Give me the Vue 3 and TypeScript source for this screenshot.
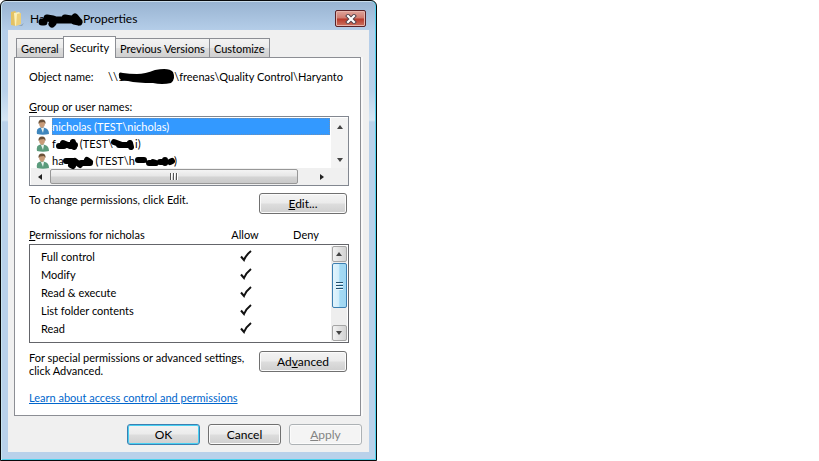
<script setup lang="ts">
import { ref } from 'vue'

interface Tab { id: string; label: string }

const tabs: Tab[] = [
  { id: 'general', label: 'General' },
  { id: 'security', label: 'Security' },
  { id: 'previous', label: 'Previous Versions' },
  { id: 'customize', label: 'Customize' },
]
const activeTab = ref('security')
const selectedUser = ref(0)
const permissions: string[] = ['Full control', 'Modify', 'Read & execute', 'List folder contents', 'Read']
</script>

<template>
  <main class="dialog">
    <header class="titlebar">
      <svg class="folder" width="16" height="18" viewBox="0 0 16 18" aria-hidden="true">
        <path d="M2 2l4-1 1 1v14l-5-1z" fill="#e3c264" />
        <path d="M5 3l5-1 1 1v11l-5 2z" fill="#fbf0b8" />
        <path d="M8 4l4-1v11l-5 2z" fill="#edd07a" />
        <path d="M9 16l3-1 3-2-2 3z" fill="#8fa3b5" />
      </svg>
      <h1 class="title">
        <span>Ha</span>
        <svg class="ink ink-title" width="45" height="14" viewBox="0 0 45 14" aria-hidden="true">
          <path d="M4 10h2M9 6l6 1M15 11l-1 1M18 8h16M27 6l6 1M37 5l4 5M36 9l5 1" />
        </svg>
        <span>Properties</span>
      </h1>
      <button class="close" type="button" aria-label="Close">
        <svg width="12" height="10" viewBox="0 0 12 10" aria-hidden="true">
          <path d="M3 2l6 6M9 2l-6 6" stroke="#51414a" stroke-width="4" stroke-linecap="square" />
          <path d="M3 2l6 6M9 2l-6 6" stroke="#fff" stroke-width="2.200" stroke-linecap="square" />
        </svg>
      </button>
    </header>

    <div class="client">
      <div class="tabs" role="tablist">
        <button
          v-for="tab in tabs"
          :key="tab.id"
          type="button"
          role="tab"
          class="tab"
          :class="{ active: tab.id === activeTab }"
          :aria-selected="tab.id === activeTab"
          @click="activeTab = tab.id"
        >{{ tab.label }}</button>
      </div>

      <section class="panel">
        <div class="object">
          <span class="object-label">Object name:</span>
          <span class="path">
            <span>\\1</span>
            <svg class="ink ink-path" width="58" height="17" viewBox="0 0 58 17" aria-hidden="true">
              <path d="M2 8Q1 3 6 5Q12 6 20 6T38 2Q52-1 56 4Q59 11 54 15Q45 17 36 15Q20 15 11 13Q1 13 2 8z" fill="#000" />
            </svg>
            <span>\freenas\Quality Control\Haryanto</span>
          </span>
        </div>

        <p id="users-label" class="label"><u>G</u>roup or user names:</p>
        <div class="users">
          <ul class="user-list" role="listbox" aria-labelledby="users-label">
            <li class="user" role="option" :class="{ selected: selectedUser === 0 }" :aria-selected="selectedUser === 0" @click="selectedUser = 0">
              <svg class="person blue" width="16" height="16" viewBox="0 0 16 16" aria-hidden="true"><use href="#person" /></svg>
              <span class="user-name">nicholas (TEST\nicholas)</span>
            </li>
            <li class="user" role="option" :class="{ selected: selectedUser === 1 }" :aria-selected="selectedUser === 1" @click="selectedUser = 1">
              <svg class="person" width="16" height="16" viewBox="0 0 16 16" aria-hidden="true"><use href="#person" /></svg>
              <span class="user-name">
                <span>f</span>
                <svg class="ink ink-a" width="22" height="13" viewBox="0 0 22 13" aria-hidden="true"><path d="M3 9h5M7 6l7 3M11 8h8M17 5l1 5" /></svg>
                <span class="gap-left">(TEST\</span>
                <svg class="ink ink-b" width="24" height="13" viewBox="0 0 24 13" aria-hidden="true"><path d="M3 5l8 3M8 8h11M19 6l1 4" /></svg>
                <span>i)</span>
              </span>
            </li>
            <li class="user" role="option" :class="{ selected: selectedUser === 2 }" :aria-selected="selectedUser === 2" @click="selectedUser = 2">
              <svg class="person" width="16" height="16" viewBox="0 0 16 16" aria-hidden="true"><use href="#person" /></svg>
              <span class="user-name">
                <span>ha</span>
                <svg class="ink ink-c" width="31" height="13" viewBox="0 0 31 13" aria-hidden="true"><path d="M3 7h7M8 11l2 1M12 7l5 4M18 9h9M24 6l3 2" /></svg>
                <span class="gap-left">(TEST\h</span>
                <svg class="ink ink-d" width="42" height="13" viewBox="0 0 42 13" aria-hidden="true"><path d="M4 6h6M15 9h5M19 8l3 1M26 8h6M31 6v3M36 8l2-1" /></svg>
                <span class="close-paren">)</span>
              </span>
            </li>
          </ul>
          <div class="vbar idle" aria-hidden="true"><i class="arrow up"></i><i class="arrow down"></i></div>
          <div class="hbar" aria-hidden="true">
            <i class="arrow left"></i>
            <div class="hthumb"><i></i><i></i><i></i></div>
            <i class="arrow right"></i>
          </div>
        </div>

        <div class="action edit">
          <p>To change permissions, click Edit.</p>
          <button class="button" type="button"><span><u>E</u>dit...</span></button>
        </div>

        <div class="perm-head">
          <span id="perm-label"><u>P</u>ermissions for nicholas</span>
          <span class="center">Allow</span>
          <span class="center">Deny</span>
        </div>
        <div class="perms">
          <table class="perm-table" aria-labelledby="perm-label">
            <tbody>
              <tr v-for="name in permissions" :key="name">
                <th scope="row">{{ name }}</th>
                <td class="allow">
                  <svg width="12" height="12" viewBox="0 0 12 12" role="img" aria-label="Allowed">
                    <path d="M1 6.500l3 3.500Q6 5 11 1" fill="none" stroke="#111" stroke-width="2" />
                  </svg>
                </td>
                <td class="deny"></td>
              </tr>
            </tbody>
          </table>
          <div class="vbar" aria-hidden="true">
            <div class="cap"><i class="arrow up"></i></div>
            <div class="vthumb"><i></i><i></i><i></i></div>
            <div class="cap bottom"><i class="arrow down"></i></div>
          </div>
        </div>

        <div class="action advanced">
          <p>For special permissions or advanced settings, click Advanced.</p>
          <button class="button" type="button"><span>Ad<u>v</u>anced</span></button>
        </div>
        <a class="link" href="#">Learn about access control and permissions</a>
      </section>

      <footer class="footer">
        <button class="button default" type="button">OK</button>
        <button class="button" type="button">Cancel</button>
        <button class="button" type="button" disabled><span><u>A</u>pply</span></button>
      </footer>
    </div>

    <svg class="defs" width="0" height="0" aria-hidden="true">
      <symbol id="person" viewBox="0 0 16 16">
        <path d="M1 15Q0 10 3 9l3-1 3 1q4 1 4 6-6 1.500-12 0z" fill="currentColor" />
        <path d="M5 9l2 5 1-5z" fill="#e9f3ef" />
        <path d="M3 4Q3 1 6 1t3 3q0 4-3 5-3-1-3-5z" class="face" />
        <path d="M2.500 5Q2 .5 6 .5T9.500 5L8 3 4 3.500z" class="hair" />
      </symbol>
    </svg>
  </main>
</template>

<style>
body {
  margin: 0;
  background: #fff;
}
</style>

<style scoped>
* {
  box-sizing: border-box;
}
.dialog {
  position: relative;
  width: 100%;
  max-width: 377px;
  padding: 0 7px 8px;
  border: 1px solid #08090b;
  border-radius: 6px 6px 0 0;
  background: linear-gradient(#98b3d1, #b5cee9 30px, #b9d1ea 90px, #d5e5f3 119px, #b9d1ea 121px);
  box-shadow: inset 1px 0 #c8e4ef, inset -1px 0 #50d2ee, inset 0 -1px #50d2ee, inset 0 1px #c9dceb;
  font-family: Lato, "Liberation Sans", sans-serif;
  font-size: 11px;
  line-height: 13px;
  color: #000;
}
.titlebar {
  display: flex;
  align-items: center;
  height: 29px;
  padding: 6px 3px 0 1px;
}
.folder {
  margin-right: 5px;
}
.title {
  display: flex;
  align-items: center;
  flex: 1;
  margin: 0;
  font-size: 12px;
  font-weight: 400;
}
.ink {
  flex: none;
  fill: none;
  stroke: #000;
  stroke-width: 6;
  stroke-linecap: round;
  stroke-linejoin: round;
  overflow: visible;
}
.ink-title {
  margin-left: -7px;
  stroke-width: 7;
}
.close {
  display: flex;
  align-items: center;
  justify-content: center;
  width: 31px;
  height: 17px;
  padding: 0;
  border: 1px solid #5a2227;
  border-radius: 2px;
  background: linear-gradient(#dfa49b, #cf7a6e 48%, #b7382a 52%, #cc7361);
  box-shadow: inset 0 0 0 1px #e7b4ac;
}
.client {
  padding: 7px 8px 7px 6px;
  background: #f0f0f0;
}
.tabs {
  display: flex;
  align-items: flex-end;
  padding-left: 2px;
  height: 20px;
}
.tab {
  height: 19px;
  padding: 1px 4px 0;
  border: 1px solid #8c8e94;
  border-bottom: 0;
  border-left-width: 0;
  background: linear-gradient(#f3f3f3, #ebebeb 48%, #dddddd 52%, #d0d0d0);
  font: inherit;
  color: inherit;
  white-space: nowrap;
}
.tab:first-child {
  border-left-width: 1px;
}
.tab.active {
  position: relative;
  height: 22px;
  margin: 0 0 -1px -1px;
  padding: 0 6px 1px;
  border-left-width: 1px;
  background: #fff;
}
.panel {
  padding: 12px 11px 11px 14px;
  border: 1px solid #8c8e94;
  background: #fff;
  box-shadow: 2px 0 #f9f9f9;
}
p {
  margin: 0;
}
.object {
  display: flex;
  align-items: center;
  height: 13px;
}
.object-label {
  flex: none;
  width: 79px;
}
.path {
  display: flex;
  align-items: center;
  white-space: nowrap;
}
.ink-path {
  margin: 0 -1px 0 -7px;
  stroke: none;
}
.label {
  margin-top: 17px;
}
.users {
  display: grid;
  grid-template-columns: 1fr 17px;
  grid-template-rows: 50px 17px;
  margin-top: 3px;
  border: 1px solid #828790;
  padding: 1px 0 0 1px;
}
.user-list {
  position: relative;
  z-index: 1;
  margin: 0;
  padding: 0 1px 0 5px;
  list-style: none;
}
.user {
  display: flex;
  align-items: center;
  height: 17px;
}
.person {
  flex: none;
  color: #5b9b7c;
}
.person.blue {
  color: #3f86bd;
}
.face {
  fill: #c79b78;
}
.hair {
  fill: #6b5138;
}
.blue .face {
  fill: #7fa3b8;
}
.blue .hair {
  fill: #3d6a8c;
}
.user-name {
  display: flex;
  align-items: center;
  flex: 1;
  height: 17px;
  white-space: nowrap;
}
.selected .user-name {
  background: #3399ff;
  outline: 1px dotted #6d8fb5;
  outline-offset: -1px;
  color: #fff;
}
.gap-left {
  margin-left: 2px;
}
.ink-b {
  margin-left: -2px;
}
.ink-c,
.ink-d {
  margin-left: -1px;
}
.close-paren {
  margin-left: -2px;
}
.vbar {
  display: flex;
  flex-direction: column;
  align-items: center;
  background: #eeeeee;
}
.idle {
  justify-content: space-between;
  padding: 7px 0 6px;
  background: #f3f3f3;
}
.hbar {
  display: flex;
  align-items: center;
  grid-column: 1 / -1;
  padding: 0 24px 0 7px;
  background: #f0f0f0;
}
.arrow {
  flex: none;
  border: 3px solid transparent;
}
.arrow.up {
  border-top: 0;
  border-bottom: 4px solid #444;
}
.arrow.down {
  border-bottom: 0;
  border-top: 4px solid #444;
}
.arrow.left {
  border-left: 0;
  border-right: 4px solid #222;
}
.arrow.right {
  border-right: 0;
  border-left: 4px solid #222;
}
.hthumb {
  display: flex;
  align-items: center;
  justify-content: center;
  gap: 1px;
  flex: 1;
  height: 15px;
  margin: 0 22px 0 8px;
  border: 1px solid #979797;
  border-radius: 2px;
  background: linear-gradient(#f4f4f4, #e6e6e6 48%, #d4d4d4 52%, #cacaca);
}
.hthumb i {
  width: 2px;
  height: 7px;
  border-left: 1px solid #555;
  background: #fff;
}
.action {
  display: flex;
  align-items: flex-start;
  justify-content: space-between;
  padding-right: 2px;
}
.button {
  flex: none;
  width: 88px;
  height: 21px;
  padding: 0;
  border: 1px solid #707070;
  border-radius: 3px;
  background: linear-gradient(#f3f3f3, #ebebeb 48%, #dddddd 52%, #cfcfcf);
  box-shadow: inset 0 0 0 1px #fbfbfb;
  font: inherit;
  font-size: 12px;
  color: inherit;
}
.edit {
  margin-top: 7px;
}
.perm-head {
  display: grid;
  grid-template-columns: 1fr 62px 60px;
  align-items: center;
  margin-top: 14px;
  padding-right: 13px;
}
.center {
  text-align: center;
}
.perms {
  display: flex;
  align-items: stretch;
  height: 99px;
  margin-top: 3px;
  padding: 1px 1px 1px 0;
  border: 1px solid #64656a;
}
.perm-table {
  flex: 1;
  height: 90px;
  margin-top: 1px;
  border-collapse: collapse;
}
.perm-table th,
.perm-table td {
  height: 18px;
  padding: 0;
  font-weight: 400;
  text-align: left;
}
.perm-table th {
  padding-left: 11px;
}
.perm-table .allow {
  width: 62px;
  text-align: center;
}
.perm-table .deny {
  width: 54px;
}
.allow svg {
  display: block;
  margin: 0 auto;
}
.perms .vbar {
  width: 16px;
}
.cap {
  display: flex;
  align-items: center;
  justify-content: center;
  width: 15px;
  height: 16px;
  border: 1px solid #a5a5a5;
  border-radius: 2px;
  background: linear-gradient(90deg, #f3f3f3, #e2e2e2 48%, #d2d2d2);
}
.cap.bottom {
  margin-top: auto;
}
.vthumb {
  display: flex;
  flex-direction: column;
  align-items: center;
  justify-content: center;
  gap: 1px;
  width: 15px;
  height: 45px;
  margin-top: 1px;
  border: 1px solid #3c7fb1;
  border-radius: 2px;
  background: linear-gradient(90deg, #e3f4fc, #d0edfb 45%, #a2daf5 52%, #a0d6f1);
}
.vthumb i {
  width: 7px;
  height: 2px;
  border-top: 1px solid #234f6c;
  background: #eaf7ff;
}
.advanced {
  margin-top: 8px;
}
.advanced p {
  width: 222px;
}
.link {
  display: block;
  width: max-content;
  margin-top: 14px;
  color: #0066cc;
}
.footer {
  display: flex;
  justify-content: flex-end;
  gap: 8px;
  margin: 8px -1px 0 0;
}
.footer .button {
  width: 73px;
}
.default {
  border-color: #3c7fb1;
  box-shadow: inset 0 0 0 1px #48d0f2;
}
.button:disabled {
  border-color: #adb2b5;
  background: #f4f4f4;
  color: #838383;
}
.defs {
  position: absolute;
}
</style>
